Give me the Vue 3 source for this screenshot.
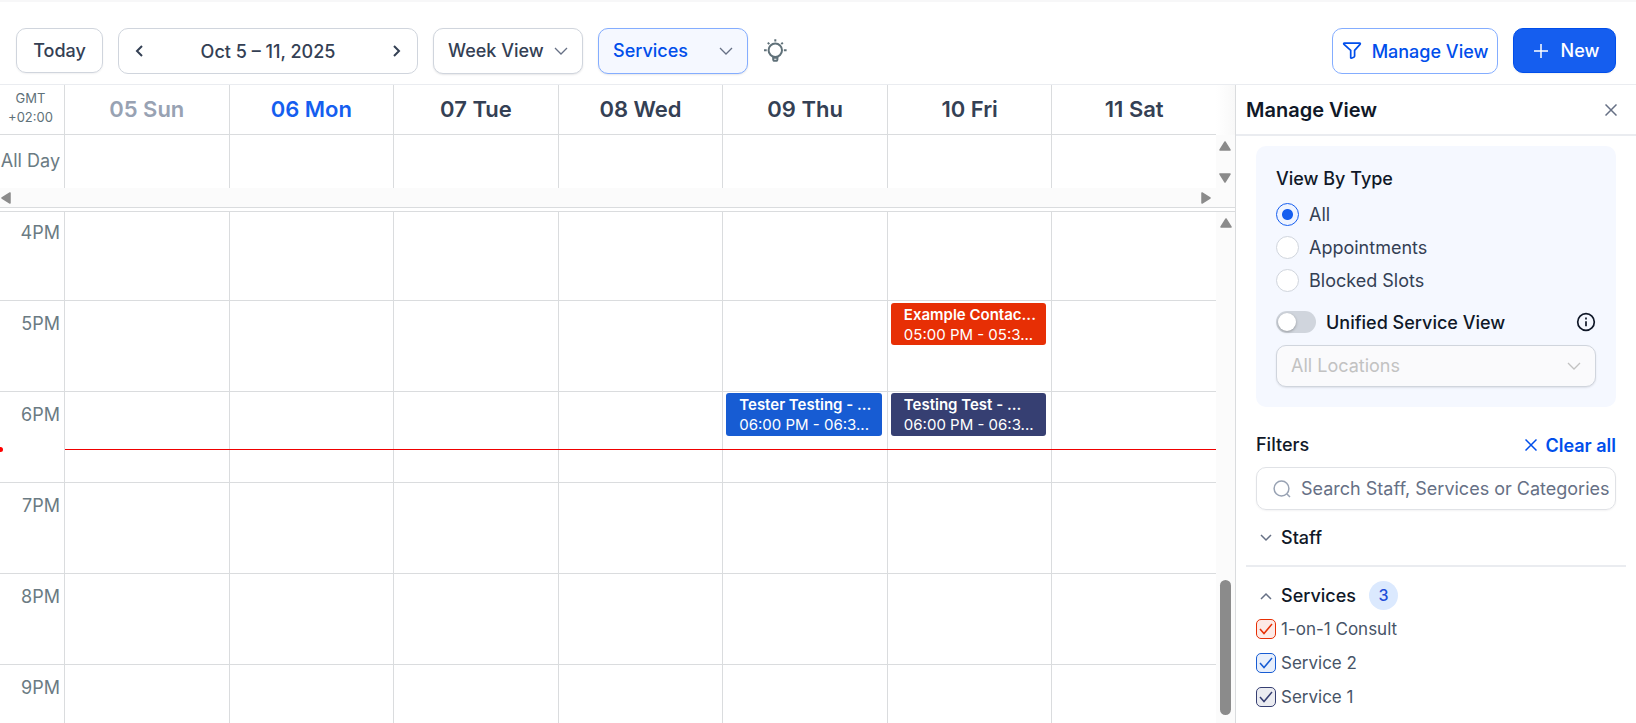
<script setup>
import { ref } from 'vue'

const days = [
  { label: '05 Sun', state: 'past', events: [] },
  { label: '06 Mon', state: 'current', events: [] },
  { label: '07 Tue', state: '', events: [] },
  { label: '08 Wed', state: '', events: [] },
  {
    label: '09 Thu',
    state: '',
    events: [
      { title: 'Tester Testing - ...', time: '06:00 PM - 06:3...', tone: 'blue', top: 184, height: 43 },
    ],
  },
  {
    label: '10 Fri',
    state: '',
    events: [
      { title: 'Example Contac...', time: '05:00 PM - 05:3...', tone: 'red', top: 94, height: 42 },
      { title: 'Testing Test - ...', time: '06:00 PM - 06:3...', tone: 'navy', top: 184, height: 43 },
    ],
  },
  { label: '11 Sat', state: '', events: [] },
]
const hours = ['4PM', '5PM', '6PM', '7PM', '8PM', '9PM']
const nowTop = 240

const view = ref('week')
const resource = ref('services')
const types = ['All', 'Appointments', 'Blocked Slots']
const type = ref('All')
const unified = ref(false)
const search = ref('')
const services = ref([
  { name: '1-on-1 Consult', tone: 'red', on: true },
  { name: 'Service 2', tone: 'blue', on: true },
  { name: 'Service 1', tone: 'navy', on: true },
])
</script>

<template>
  <div class="page">
    <header class="toolbar">
      <button class="btn today" type="button">Today</button>
      <div class="range">
        <button class="arrow" type="button" aria-label="Previous week">
          <svg width="20" height="20" viewBox="0 0 20 20"><path d="m13 5-5 5 5 5" /></svg>
        </button>
        <span>Oct 5 – 11, 2025</span>
        <button class="arrow" type="button" aria-label="Next week">
          <svg width="20" height="20" viewBox="0 0 20 20"><path d="m7 5 5 5-5 5" /></svg>
        </button>
      </div>
      <div class="select">
        <select v-model="view" aria-label="Calendar view">
          <option value="week">Week View</option>
          <option value="day">Day View</option>
        </select>
        <svg class="chev" width="14" height="8" viewBox="0 0 14 8"><path d="m1 1 6 6 6-6" /></svg>
      </div>
      <div class="select active">
        <select v-model="resource" aria-label="Group by">
          <option value="services">Services</option>
          <option value="staff">Staff</option>
        </select>
        <svg class="chev" width="14" height="8" viewBox="0 0 14 8"><path d="m1 1 6 6 6-6" /></svg>
      </div>
      <button class="bulb" type="button" aria-label="Tips">
        <svg width="24" height="24" viewBox="0 0 24 24">
          <circle cx="12.3" cy="11.3" r="6.7" />
          <path d="M10.2 17.6v3a1.2 1.2 0 0 0 1.2 1.2h1.8a1.2 1.2 0 0 0 1.2-1.2v-3M10 18.8h4.6M12.3.2v2.2M1 11.3h2.7M20.9 11.3h2.7M4.8 3.6l1.5 1.5M19.8 3.6l-1.5 1.5" />
        </svg>
      </button>
      <div class="spacer"></div>
      <button class="btn manage" type="button">
        <svg width="20" height="20" viewBox="0 0 20 20"><path d="M2.2 2.2h15.6c.5 0 .7.5.4.9L12.6 9.4v5.8c0 .9-3.9 2.6-3.9 1.6V9.4L1.8 3.1c-.3-.4-.1-.9.4-.9Z" /></svg>
        Manage View
      </button>
      <button class="btn new" type="button">
        <svg width="14" height="14" viewBox="0 0 14 14"><path d="M7 0v14M0 7h14" /></svg>
        New
      </button>
    </header>

    <main class="main">
      <section class="calendar" aria-label="Week calendar">
        <div class="row head">
          <div class="zone"><span>GMT</span><span>+02:00</span></div>
          <div v-for="d in days" :key="d.label" class="cell day" :class="d.state">{{ d.label }}</div>
          <div class="edge"></div>
        </div>
        <div class="row allday">
          <div class="alllabel">All Day</div>
          <div v-for="d in days" :key="d.label" class="cell"></div>
          <div class="track updown">
            <svg width="12" height="10" viewBox="0 0 12 10"><path d="M6 1 11 9H1Z" /></svg>
            <svg width="12" height="10" viewBox="0 0 12 10"><path d="M6 9 1 1h10Z" /></svg>
          </div>
        </div>
        <div class="hscroll">
          <svg width="10" height="12" viewBox="0 0 10 12"><path d="M1 6 9 1v10Z" /></svg>
          <svg width="10" height="12" viewBox="0 0 10 12"><path d="M9 6 1 1v10Z" /></svg>
        </div>
        <div class="divider"></div>
        <div class="viewport">
          <div class="row hours">
            <div class="times">
              <div v-for="h in hours" :key="h" class="hour">{{ h }}</div>
            </div>
            <div v-for="d in days" :key="d.label" class="cell col">
              <div v-for="h in hours" :key="h" class="hour"></div>
              <article
                v-for="e in d.events"
                :key="e.title"
                class="event"
                :class="e.tone"
                :style="{ top: e.top + 'px', height: e.height + 'px' }"
              >
                <strong>{{ e.title }}</strong>
                <span>{{ e.time }}</span>
              </article>
            </div>
            <div class="now" :style="{ top: nowTop + 'px' }"></div>
            <div class="marker" :style="{ top: nowTop + 'px' }"></div>
          </div>
          <div class="track vscroll">
            <svg width="12" height="10" viewBox="0 0 12 10"><path d="M6 1 11 9H1Z" /></svg>
            <div class="thumb"></div>
          </div>
        </div>
      </section>

      <aside class="panel">
        <div class="panel-head">
          <h2>Manage View</h2>
          <button class="close" type="button" aria-label="Close">
            <svg width="12" height="12" viewBox="0 0 12 12"><path d="m.5.5 11 11M11.5.5l-11 11" /></svg>
          </button>
        </div>
        <div class="card">
          <h3>View By Type</h3>
          <label v-for="t in types" :key="t" class="radio">
            <input v-model="type" type="radio" name="type" :value="t" />{{ t }}
          </label>
          <div class="unified">
            <label><input v-model="unified" type="checkbox" role="switch" />Unified Service View</label>
            <svg class="info" width="20" height="20" viewBox="0 0 20 20">
              <circle cx="10" cy="10" r="8.3" />
              <path d="M10 9.2v5M10 5.6v1.8" />
            </svg>
          </div>
          <div class="select disabled">
            <select disabled aria-label="Location"><option>All Locations</option></select>
            <svg class="chev" width="14" height="8" viewBox="0 0 14 8"><path d="m1 1 6 6 6-6" /></svg>
          </div>
        </div>
        <div class="filters">
          <h3>Filters</h3>
          <button class="clear" type="button">
            <svg width="12" height="12" viewBox="0 0 12 12"><path d="m.5.5 11 11M11.5.5l-11 11" /></svg>
            Clear all
          </button>
        </div>
        <div class="search">
          <svg width="18" height="18" viewBox="0 0 18 18"><circle cx="8.5" cy="8.5" r="7.4" /><path d="m14 14 3 3" /></svg>
          <input v-model="search" type="text" aria-label="Search filters" placeholder="Search Staff, Services or Categories" />
        </div>
        <button class="group staff" type="button">
          <svg width="12" height="8" viewBox="0 0 12 8"><path d="m1 1 5 5 5-5" /></svg>
          Staff
        </button>
        <hr />
        <button class="group services" type="button">
          <svg width="12" height="8" viewBox="0 0 12 8"><path d="m1 7 5-5 5 5" /></svg>
          Services
          <span class="badge">3</span>
        </button>
        <label v-for="s in services" :key="s.name" class="check" :class="s.tone">
          <span class="box">
            <input v-model="s.on" type="checkbox" />
            <svg v-if="s.on" width="14" height="12" viewBox="0 0 14 12"><path d="m1 6 4 4.5L13 1" /></svg>
          </span>
          {{ s.name }}
        </label>
      </aside>
    </main>
  </div>
</template>

<style>
body {
  margin: 0;
  background: #fff;
}
</style>

<style scoped>
* {
  box-sizing: border-box;
}
.page {
  display: flex;
  flex-direction: column;
  height: 100vh;
  overflow: hidden;
  font-family: Inter, 'Liberation Sans', sans-serif;
  font-size: 18px;
  color: #344054;
}
button,
select,
input {
  margin: 0;
  font: inherit;
  color: inherit;
}
button {
  padding: 0;
  border: 0;
  background: none;
}
svg {
  display: block;
  flex: none;
  fill: none;
  stroke: currentColor;
  stroke-width: 1.5;
}
h2,
h3 {
  margin: 0;
  font-weight: 500;
  color: #101828;
}
h3 {
  font-size: 18px;
  line-height: 22px;
}

.toolbar {
  display: flex;
  align-items: flex-start;
  gap: 15px;
  padding: 26px 20px 10px 16px;
  border-top: 2px solid #f7f7f8;
  border-bottom: 1px solid #eaecf0;
  font-weight: 500;
}
.btn {
  display: flex;
  align-items: center;
  justify-content: center;
  height: 45px;
  border: 1px solid #d0d5dd;
  border-radius: 10px;
  box-shadow: 0 1px 2px rgba(16, 24, 40, 0.06);
}
.today {
  width: 87px;
}
.range {
  display: flex;
  align-items: center;
  justify-content: space-between;
  width: 300px;
  height: 46px;
  padding: 0 10px;
  border: 1px solid #d0d5dd;
  border-radius: 10px;
}
.arrow svg {
  stroke-width: 2;
}
.select {
  display: grid;
  align-items: center;
  width: 150px;
  height: 46px;
}
.select > * {
  grid-area: 1 / 1;
}
.select select {
  appearance: none;
  width: 100%;
  height: 100%;
  padding: 0 14px 2px;
  border: 1px solid #d0d5dd;
  border-radius: 10px;
  background: #fff;
  box-shadow: 0 1px 2px rgba(16, 24, 40, 0.1);
}
.chev {
  justify-self: end;
  margin-right: 15px;
  color: #667085;
  stroke-width: 1.3;
  pointer-events: none;
}
.select.active select {
  border-color: #84adff;
  background: #f5f8ff;
  color: #004eeb;
}
.bulb {
  align-self: center;
  color: #607179;
}
.bulb svg {
  stroke-width: 2;
}
.spacer {
  flex: 1;
}
.manage {
  gap: 10px;
  width: 166px;
  height: 46px;
  border-color: #84adff;
  box-shadow: none;
  color: #004eeb;
}
.manage svg {
  stroke-width: 1.7;
}
.new {
  gap: 13px;
  width: 103px;
  padding-left: 4px;
  border-color: #004eeb;
  background: #155eef;
  color: #fff;
}

.main {
  display: flex;
  flex: 1;
  min-height: 0;
}
.calendar {
  display: flex;
  flex: 1;
  flex-direction: column;
  min-width: 0;
}
.row {
  display: grid;
  grid-template-columns: 64px repeat(7, 1fr) 19px;
}
.cell {
  min-width: 0;
  border-left: 1px solid #dadcde;
}
.head > * {
  height: 50px;
  border-bottom: 1px solid #dadcde;
}
.head > .edge {
  border-bottom: 0;
  background: linear-gradient(90deg, #fff, #f8f8f8);
}
.zone {
  display: flex;
  flex-direction: column;
  align-items: center;
  padding-right: 3px;
  padding-top: 4px;
  font-size: 13px;
  line-height: 19px;
  color: #607179;
}
.day {
  display: flex;
  align-items: center;
  justify-content: center;
  padding-bottom: 2px;
  font-size: 22px;
  font-weight: 600;
}
.past {
  color: #98a2b3;
}
.current {
  color: #155eef;
}
.allday {
  height: 53px;
}
.alllabel {
  padding: 15px 4px 0 0;
  line-height: 22px;
  text-align: right;
  white-space: nowrap;
  color: #6b7b83;
}
.track {
  display: flex;
  flex-direction: column;
  align-items: center;
  background: #fbfbfb;
}
.track svg,
.hscroll svg {
  fill: #8b8b8b;
  stroke: #8b8b8b;
  stroke-linejoin: round;
}
.updown {
  justify-content: space-between;
  padding: 6px 0 5px;
}
.hscroll {
  display: flex;
  align-items: center;
  justify-content: space-between;
  height: 19px;
  padding: 0 24px 0 1px;
  background: #fbfbfb;
}
.divider {
  height: 5px;
  border-top: 1px solid #dadcde;
  border-bottom: 1px solid #dadcde;
}
.viewport {
  display: flex;
  flex: 1;
  min-height: 0;
  overflow: hidden;
}
.hours {
  position: relative;
  flex: 1;
  grid-template-columns: 64px repeat(7, 1fr);
  align-self: flex-start;
  margin-top: -3px;
}
.hour {
  height: 91px;
  padding: 12px 4px 0 0;
  border-top: 1px solid #dadcde;
  line-height: 22px;
  text-align: right;
  color: #6b7b83;
}
.col {
  position: relative;
}
.event {
  position: absolute;
  right: 5px;
  left: 3px;
  padding: 2px 4px 0 13px;
  border-radius: 3px;
  box-shadow: 0 0 0 1px #fff;
  font-size: 15px;
  line-height: 20px;
  color: #fff;
}
.event > * {
  display: block;
  overflow: hidden;
  text-overflow: ellipsis;
  white-space: nowrap;
}
.event strong {
  font-weight: 600;
}
.event.red {
  background: #e72f05;
}
.event.blue {
  background: #175cd3;
}
.event.navy {
  background: #363f72;
}
.now {
  position: absolute;
  right: 0;
  left: 65px;
  border-top: 1px solid #f00000;
}
.marker {
  position: absolute;
  left: -2px;
  margin-top: -2px;
  width: 5px;
  height: 5px;
  border-radius: 3px;
  background: #f00;
}
.vscroll {
  justify-content: space-between;
  width: 19px;
  padding: 6px 0 8px;
}
.thumb {
  width: 11px;
  height: 135px;
  border-radius: 6px;
  background: #8b8b8b;
}

.panel {
  display: flex;
  flex: none;
  flex-direction: column;
  width: 401px;
  padding: 0 20px;
  border-left: 1px solid #dadcde;
}
.panel-head {
  display: flex;
  align-items: center;
  justify-content: space-between;
  height: 51px;
  margin: 0 -20px;
  padding: 0 19px 0 10px;
  border-bottom: 2px solid #eaecf0;
}
h2 {
  font-size: 20px;
  font-weight: 600;
}
.close {
  color: #667085;
}
.card {
  margin-top: 10px;
  padding: 22px 20px 20px;
  border-radius: 10px;
  background: #f5f8ff;
}
.card h3 {
  margin-bottom: 8px;
}
.radio {
  display: flex;
  align-items: center;
  gap: 10px;
  height: 33px;
}
.radio input {
  appearance: none;
  width: 23px;
  height: 23px;
  border: 1px solid #d0d5dd;
  border-radius: 50%;
  background: #fff;
}
.radio input:checked {
  border-color: #155eef;
  background: radial-gradient(circle, #155eef 5px, #eff4ff 6px);
}
.unified {
  display: flex;
  align-items: center;
  justify-content: space-between;
  height: 22px;
  margin: 14px 0 12px;
  font-weight: 500;
  color: #101828;
}
.unified label {
  display: flex;
  align-items: center;
  gap: 10px;
}
.unified input {
  display: flex;
  align-items: center;
  appearance: none;
  width: 40px;
  height: 22px;
  padding: 0 2px;
  border-radius: 11px;
  background: #d0d5dd;
}
.unified input::before {
  content: '';
  width: 18px;
  height: 18px;
  border-radius: 50%;
  background: #fff;
  box-shadow: 0 1px 3px rgba(0, 0, 0, 0.3);
}
.unified input:checked {
  justify-content: flex-end;
  background: #155eef;
}
.info {
  stroke-width: 1.7;
}
.disabled {
  width: auto;
  height: 42px;
}
.disabled select {
  background: #fafafc;
  color: #c2c2c2;
  opacity: 1;
}
.disabled .chev {
  color: #c2c2c2;
}
.filters {
  display: flex;
  align-items: center;
  justify-content: space-between;
  height: 22px;
  margin-top: 27px;
}
.clear {
  display: flex;
  align-items: center;
  gap: 8px;
  font-weight: 600;
  color: #004eeb;
}
.search {
  display: flex;
  align-items: center;
  gap: 10px;
  height: 43px;
  margin-top: 11px;
  padding: 0 4px 0 16px;
  border: 1px solid #e0e2e6;
  border-radius: 10px;
  box-shadow: 0 1px 2px rgba(16, 24, 40, 0.05);
  color: #98a2b3;
}
.search input {
  flex: 1;
  min-width: 0;
  padding: 0;
  border: 0;
  outline: 0;
  background: none;
  color: #344054;
}
.search input::placeholder {
  color: #667085;
}
.group {
  display: flex;
  align-items: center;
  gap: 9px;
  height: 29px;
  padding-left: 4px;
  font-weight: 500;
  color: #101828;
}
.group svg {
  color: #667085;
}
.staff {
  margin-top: 13px;
}
hr {
  align-self: stretch;
  margin: 13px -10px 14px;
  border: 0;
  border-top: 2px solid #eaecf0;
}
.badge {
  width: 29px;
  margin-left: 4px;
  border-radius: 50%;
  background: #dbe9fe;
  font-size: 16px;
  line-height: 29px;
  text-align: center;
  color: #1d4ed8;
}
.services {
  margin-bottom: 2px;
}
.check {
  display: flex;
  align-items: center;
  gap: 5px;
  height: 34px;
  font-size: 17px;
  color: #475467;
}
.box {
  display: grid;
  place-items: center;
}
.box > * {
  grid-area: 1 / 1;
}
.box svg {
  pointer-events: none;
}
.box input {
  appearance: none;
  width: 20px;
  height: 20px;
  border: 1px solid currentColor;
  border-radius: 5px;
}
.red .box {
  color: #e72f05;
}
.blue .box {
  color: #175cd3;
}
.navy .box {
  color: #363f72;
}
.red input {
  background: #fdeae6;
}
.blue input {
  background: #e8effb;
}
.navy input {
  background: #ebecf1;
}
</style>
